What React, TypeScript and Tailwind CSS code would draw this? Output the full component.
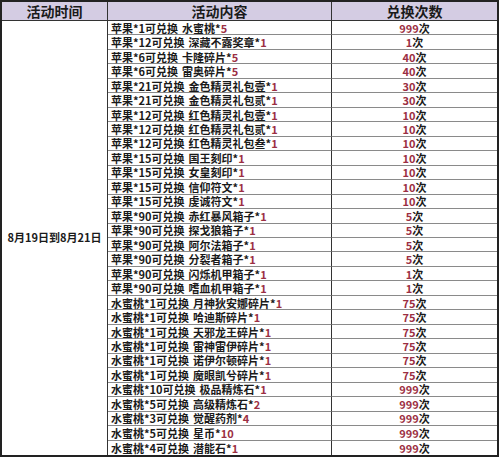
import React from 'react';

// one line of the exchange table
type Row = { cost: string; reward: string; n: string; times: string };

const rows: Row[] = [
  { cost: '苹果*1可兑换', reward: '水蜜桃', n: '5', times: '999' },
  { cost: '苹果*12可兑换', reward: '深藏不露奖章', n: '1', times: '1' },
  { cost: '苹果*6可兑换', reward: '卡隆碎片', n: '5', times: '40' },
  { cost: '苹果*6可兑换', reward: '雷奥碎片', n: '5', times: '40' },
  { cost: '苹果*21可兑换', reward: '金色精灵礼包壹', n: '1', times: '30' },
  { cost: '苹果*21可兑换', reward: '金色精灵礼包贰', n: '1', times: '30' },
  { cost: '苹果*12可兑换', reward: '红色精灵礼包壹', n: '1', times: '10' },
  { cost: '苹果*12可兑换', reward: '红色精灵礼包贰', n: '1', times: '10' },
  { cost: '苹果*12可兑换', reward: '红色精灵礼包叁', n: '1', times: '10' },
  { cost: '苹果*15可兑换', reward: '国王刻印', n: '1', times: '10' },
  { cost: '苹果*15可兑换', reward: '女皇刻印', n: '1', times: '10' },
  { cost: '苹果*15可兑换', reward: '信仰符文', n: '1', times: '10' },
  { cost: '苹果*15可兑换', reward: '虔诚符文', n: '1', times: '10' },
  { cost: '苹果*90可兑换', reward: '赤红暴风箱子', n: '1', times: '5' },
  { cost: '苹果*90可兑换', reward: '探戈狼箱子', n: '1', times: '5' },
  { cost: '苹果*90可兑换', reward: '阿尔法箱子', n: '1', times: '5' },
  { cost: '苹果*90可兑换', reward: '分裂者箱子', n: '1', times: '5' },
  { cost: '苹果*90可兑换', reward: '闪烁机甲箱子', n: '1', times: '1' },
  { cost: '苹果*90可兑换', reward: '嗜血机甲箱子', n: '1', times: '1' },
  { cost: '水蜜桃*1可兑换', reward: '月神狄安娜碎片', n: '1', times: '75' },
  { cost: '水蜜桃*1可兑换', reward: '哈迪斯碎片', n: '1', times: '75' },
  { cost: '水蜜桃*1可兑换', reward: '天邪龙王碎片', n: '1', times: '75' },
  { cost: '水蜜桃*1可兑换', reward: '雷神雷伊碎片', n: '1', times: '75' },
  { cost: '水蜜桃*1可兑换', reward: '诺伊尔顿碎片', n: '1', times: '75' },
  { cost: '水蜜桃*1可兑换', reward: '魔眼凯兮碎片', n: '1', times: '75' },
  { cost: '水蜜桃*10可兑换', reward: '极品精炼石', n: '1', times: '999' },
  { cost: '水蜜桃*5可兑换', reward: '高级精炼石', n: '2', times: '999' },
  { cost: '水蜜桃*3可兑换', reward: '觉醒药剂', n: '4', times: '999' },
  { cost: '水蜜桃*5可兑换', reward: '星币', n: '10', times: '999' },
  { cost: '水蜜桃*4可兑换', reward: '潜能石', n: '1', times: '999' },
];

const App = () => {
  return (
    <div className="w-[500px] h-[457px] bg-white">
      <div
        className="grid grid-cols-[106px_224px_1fr] grid-rows-[19px_repeat(30,minmax(0,1fr))] w-[499px] h-[457px] border-2 border-[#222] text-[#1a1a1a] font-bold"
        style={{ fontFamily: '"Noto Sans CJK SC", "Noto Sans", sans-serif' }}
      >
        <div className="bg-[#d4cce3] border-r border-b border-[#333] flex items-center justify-center text-[14px] leading-[17px]">
          活动时间
        </div>
        <div className="bg-[#d4cce3] border-r border-b border-[#333] flex items-center justify-center text-[14px] leading-[17px]">
          活动内容
        </div>
        <div className="bg-[#d4cce3] border-b border-[#333] flex items-center justify-center text-[14px] leading-[17px]">
          兑换次数
        </div>

        <div className="row-span-30 border-r border-[#333] flex items-center justify-center text-[11px] leading-[13px]">
          8月19日到8月21日
        </div>

        {rows.map((r, i) => {
          const last = i === rows.length - 1;
          return (
            <React.Fragment key={i}>
              <div
                className={`border-r border-[#333] ${last ? '' : 'border-b border-b-[#8a8a8a]'} flex items-center pl-[3px] text-[11px] leading-[12px] whitespace-nowrap`}
              >
                <span>{r.cost}</span>
                <span className="ml-[4px]">{r.reward}</span>
                <span>*</span>
                <span className="text-[#9c2f43]">{r.n}</span>
              </div>
              <div
                className={`${last ? '' : 'border-b border-[#8a8a8a]'} flex items-center justify-center text-[11px] leading-[12px]`}
              >
                <span className="text-[#9c2f43]">{r.times}</span>
                <span>次</span>
              </div>
            </React.Fragment>
          );
        })}
      </div>
    </div>
  );
};

export default App;
